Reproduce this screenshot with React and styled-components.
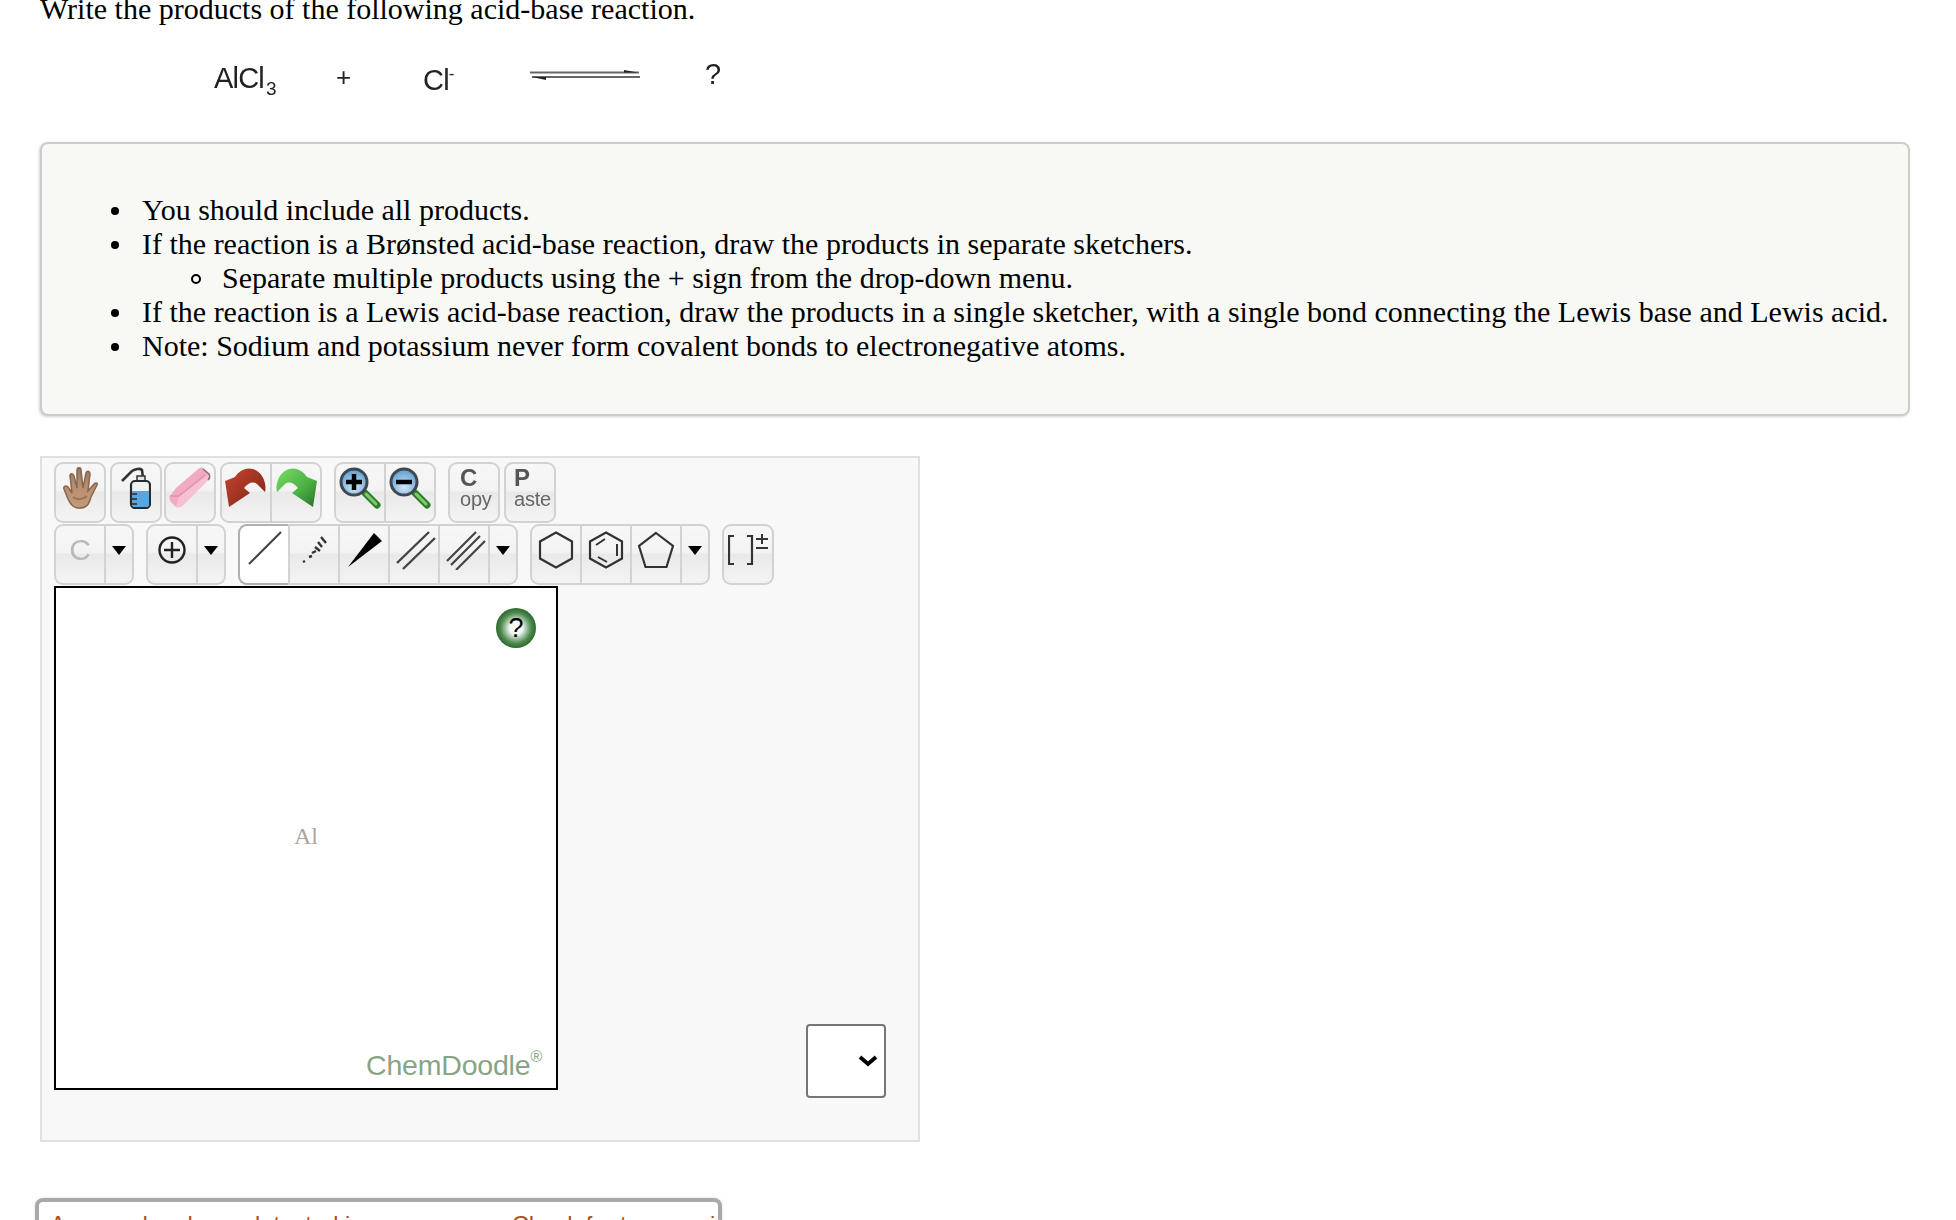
import React from 'react';
import styled, { createGlobalStyle } from 'styled-components';

const Global = createGlobalStyle`
  html, body { margin: 0; padding: 0; background: #fff; }
  body { width: 1956px; height: 1220px; overflow: hidden; font-family: "Liberation Serif", "Times New Roman", serif; color: #000; }
`;
const Page = styled.div`
  width: 1956px; height: 1220px; overflow: hidden; padding-left: 40px; box-sizing: border-box;
`;
const Title = styled.p`
  margin: -8px 0 0; font-size: 30px; line-height: 34px; height: 34px; white-space: nowrap;
`;
const Equation = styled.div`
  display: flex; align-items: flex-start; height: 116px; box-sizing: border-box; padding-top: 32px;
  font-family: "Liberation Sans", Arial, sans-serif; font-size: 29px; color: #222; filter: blur(0.5px);
`;
const Chem = styled.span`
  margin-left: ${p => p.$ml}px; width: ${p => p.$w}px; letter-spacing: ${p => p.$ls || 0}px; line-height: 32px; white-space: nowrap;
  padding-top: ${p => p.$pt || 0}px; font-size: ${p => p.$fs || 29}px;
  sub { font-size: 19px; line-height: 0; letter-spacing: 0; margin-left: 2px; } sup { font-size: 17px; line-height: 0; }
`;
const Arrow = styled.svg`
  margin-top: 9px; flex: none;
`;
const Note = styled.div`
  width: 1870px; height: 274px; box-sizing: border-box; background: #f8f9f4; border: 2px solid #ccc; border-radius: 8px;
  box-shadow: -1px 1px 3px rgba(0,0,0,.18); font-size: 30px; line-height: 34px; padding-top: 49px; white-space: nowrap;
`;
const List = styled.ul`
  margin: 0; padding-left: 100px; list-style: none;
  ul { padding-left: 80px; list-style: none; }
`;
const Item = styled.li`
  position: relative;
  &::before {
    content: ""; position: absolute; left: -31px; top: 14px; width: 8px; height: 8px; border-radius: 50%; box-sizing: border-box;
    background: #000;
  }
`;
const SubItem = styled.li`
  position: relative;
  &::before {
    content: ""; position: absolute; left: -31px; top: 13px; width: 10px; height: 10px; border-radius: 50%; box-sizing: border-box;
    border: 2px solid #000;
  }
`;
const Sketcher = styled.div`
  margin-top: 40px; width: 880px; height: 686px; box-sizing: border-box; background: #f8f8f8; border: 2px solid #e0e0e0;
  padding: 4px 0 0 12px;
`;
const Row = styled.div`
  display: flex; height: 61px; margin-bottom: 1px;
`;
const Group = styled.div`
  display: flex; margin-left: ${p => p.$ml || 0}px; border: 2px solid #d2d2d2; border-radius: 9px; box-sizing: border-box; height: 100%;
  background: linear-gradient(#f7f7f7 0%, #f3f3f3 46%, #e9e9e9 50%, #f4f4f4 100%);
`;
const Cell = styled.div`
  width: ${p => p.$w || 48}px; flex: none; height: 100%; display: flex; align-items: center; justify-content: center;
  box-sizing: border-box; padding-bottom: 9px;
  &:not(:first-child) { border-left: 2px solid #d2d2d2; width: ${p => (p.$w || 48) + 2}px; }
  svg { filter: blur(0.5px); }
`;
const ActiveCell = styled.div`
  width: 50px; flex: none; height: calc(100% + 4px); margin: -2px 0 -2px -2px; background: #fff; box-sizing: border-box;
  display: flex; align-items: center; justify-content: center;
  border: 2px solid #b0b0b0; border-right: 0; border-radius: 9px 0 0 9px; padding-bottom: 13px; padding-left: 2px;
  svg { filter: blur(0.5px); }
`;
const Tri = styled.span`
  width: 0; height: 0; border-left: 7.5px solid transparent; border-right: 7.5px solid transparent; border-top: 9px solid #000; margin-right: 1px;
`;
const Letter = styled.div`
  font-family: "Liberation Sans", Arial, sans-serif; color: #666; width: 100%; padding-left: ${p => p.$pl || 10}px; box-sizing: border-box; filter: blur(0.5px); white-space: nowrap;
  b { display: block; font-size: 24px; font-weight: 700; line-height: 22px; color: #555; }
  span { display: block; font-size: 20px; line-height: 20px; letter-spacing: -0.2px; }
`;
const CarbonLabel = styled.span`
  font-family: "Liberation Sans", Arial, sans-serif; font-size: 30px; color: #b8b8b8; filter: blur(0.5px);
`;
const Lower = styled.div`
  display: flex; align-items: flex-start;
`;
const Canvas = styled.div`
  width: 504px; height: 504px; box-sizing: border-box; background: #fff; border: 2px solid #000; position: relative; flex: none;
`;
const Help = styled.div`
  position: absolute; left: 440px; top: 20px; width: 40px; height: 40px; border-radius: 50%;
  background: radial-gradient(circle closest-side, #fff 0%, #f2f7f2 32%, #4f8a50 76%, #2a6a2d 100%);
  display: flex; align-items: center; justify-content: center;
  font-family: "Liberation Sans", Arial, sans-serif; font-size: 27px; line-height: 1; color: #000;
`;
const Atom = styled.span`
  position: absolute; left: 238px; top: 234px; font-size: 24px; line-height: 28px; color: #b0a2a0;
`;
const Brand = styled.span`
  position: absolute; right: 14px; bottom: 6px; font-family: "Liberation Sans", Arial, sans-serif; font-size: 28.5px; line-height: 34px; color: #88a484; letter-spacing: -0.2px;
  sup { font-size: 16px; position: relative; top: -3px; line-height: 0; vertical-align: super; }
`;
const SelectBox = styled.div`
  margin-left: 248px; margin-top: 438px; width: 80px; height: 74px; box-sizing: border-box; background: #fff; border: 2px solid #767676; border-radius: 4px;
  display: flex; align-items: center; justify-content: flex-end; padding-right: 6px;
`;
const Bottom = styled.div`
  margin: 56px 0 0 -5px; width: 687px; height: 60px; box-sizing: border-box; border: 4px solid #a9a9ad; border-radius: 8px; padding: 8px 11px;
  font-family: "Liberation Sans", Arial, sans-serif; font-size: 23.8px; line-height: 30px; color: #a5521f; white-space: nowrap; overflow: hidden;
  box-shadow: 0 0 3px rgba(0,0,0,.15);
`;

const Hand = () => <svg width="42" height="42" viewBox="-4 0 42 42"><defs><linearGradient id="hg" x1="0" y1="0" x2="0" y2="1"><stop offset="0" stopColor="#8f7a68"/><stop offset=".45" stopColor="#b98f70"/><stop offset="1" stopColor="#c39a7a"/></linearGradient></defs><path d="M14 41c-5-1-7-5-9-9L1 22c-1-3 2-4 4-2l4 6L7 9c0-3 3-3 4 0l3 12 0-18c0-3 4-3 4 0l2 18 3-15c1-3 4-2 4 1l-2 17 6-7c2-2 4-1 3 1l-6 12c-2 7-4 12-14 11z" fill="url(#hg)" stroke="#86684f" strokeWidth="1.5"/><path d="M10 30c4 3 10 3 14-1" stroke="#9a7558" strokeWidth="2" fill="none"/></svg>;
const Wash = () => <svg width="30" height="42" viewBox="0 0 30 42"><path d="M1 14L11 4c3-2 8-3 10-1l1 8" fill="none" stroke="#333" strokeWidth="2.6"/><rect x="16" y="9" width="8" height="6" fill="#dfe5e8" stroke="#333" strokeWidth="1.5"/><rect x="10" y="14" width="19" height="27" rx="4" fill="#eef2f3" stroke="#2a2a2a" strokeWidth="2.2"/><path d="M11 24h17v13a3 3 0 0 1-3 3H14a3 3 0 0 1-3-3z" fill="#58a6dd"/><path d="M11 27h5M11 32h5M11 37h5" stroke="#2a2a2a" strokeWidth="1.5"/></svg>;
const Eraser = () => <svg width="42" height="42" viewBox="0 0 42 42"><path d="M1 29l6-8L28 3c2-2 4-3 6-2l6 6c1 2 1 4-1 6L14 38c-2 2-5 3-7 2l-5-5c-1-2-2-4-1-6z" fill="#f2aac3"/><path d="M40 7c1 2 1 4-1 6L14 38c-2 2-5 3-7 2l3-11z" fill="#f7c0d3"/><path d="M1 29l9 0L36 8" fill="none" stroke="#dd93ae" strokeWidth="1.5"/><path d="M34 2l6 5c1 2 1 4-1 6" fill="none" stroke="#84707a" strokeWidth="1.6"/></svg>;
const Undo = () => <svg width="42" height="40" viewBox="0 0 42 40"><defs><linearGradient id="ug" x1="0" y1="0" x2="1" y2="1"><stop offset="0" stopColor="#c5442c"/><stop offset="1" stopColor="#7d2417"/></linearGradient></defs><path d="M0 13L4 39 25 25 19 20C23 15 28 13 32 16L40 24C42 16 38 4 28 1 20-1 14 3 10 9z" fill="url(#ug)"/></svg>;
const Redo = () => <svg width="42" height="40" viewBox="0 0 42 40"><defs><linearGradient id="rg" x1="0" y1="0" x2="1" y2="1"><stop offset="0" stopColor="#78dc68"/><stop offset=".6" stopColor="#4aae42"/><stop offset="1" stopColor="#2b6e28"/></linearGradient></defs><path d="M42 13L38 39 17 25 23 20C19 15 14 13 10 16L2 24C0 16 4 4 14 1 22-1 28 3 32 9z" fill="url(#rg)"/></svg>;
const Zoom = ({ plus, id }) => <svg width="42" height="42" viewBox="0 0 42 42"><defs><radialGradient id={id} cx=".5" cy=".7" r=".7"><stop offset="0" stopColor="#cfe6f7"/><stop offset="1" stopColor="#5b9bd0"/></radialGradient></defs><path d="M26 26l12 12" stroke="#2f7d2b" strokeWidth="7" strokeLinecap="round"/><path d="M27 27l10 10" stroke="#7ccc68" strokeWidth="3" strokeLinecap="round"/><circle cx="15" cy="15" r="13" fill={`url(#${id})`} stroke="#3f4750" strokeWidth="3"/><path d="M7 15h16" stroke="#000" strokeWidth="4.5"/>{plus && <path d="M15 7v16" stroke="#000" strokeWidth="4.5"/>}</svg>;
const PlusCircle = () => <svg width="30" height="30" viewBox="0 0 30 30"><circle cx="15" cy="15" r="12.5" fill="none" stroke="#222" strokeWidth="2.4"/><path d="M15 7v16M7 15h16" stroke="#222" strokeWidth="2.4"/></svg>;
const Single = () => <svg width="36" height="36" viewBox="0 0 36 36"><path d="M2 34L34 2" stroke="#444" strokeWidth="2.2"/></svg>;
const Dashed = () => <svg width="32" height="32" viewBox="-4 2 32 32"><path d="M1 30l2-1M7 25l3-1M10 21l4-2M13 15l5 4M16 10l4 5M19 5l5 6" stroke="#333" strokeWidth="2.4"/></svg>;
const Wedge = () => <svg width="38" height="36" viewBox="-2 0 38 36"><path d="M1 35L27 1l8 8z" fill="#000"/></svg>;
const Double = () => <svg width="44" height="40" viewBox="-4 0 44 40"><path d="M1 33L33 2M7 39L39 8" stroke="#444" strokeWidth="2.4"/></svg>;
const Triple = () => <svg width="44" height="40" viewBox="-4 0 44 40"><path d="M1 31L30 2M5 35L34 6M10 40L39 11" stroke="#444" strokeWidth="2.2"/></svg>;
const Hexagon = () => <svg width="36" height="38" viewBox="0 0 36 38"><path d="M18 1.500l16 9v17l-16 9-16-9v-17z" fill="none" stroke="#333" strokeWidth="2.2"/></svg>;
const Benzene = () => <svg width="36" height="38" viewBox="0 0 36 38"><path d="M18 1.500l16 9v17l-16 9-16-9v-17z" fill="none" stroke="#333" strokeWidth="2.2"/><path d="M8 14l9-6M29 13v12M10 26l9 5" stroke="#333" strokeWidth="2"/></svg>;
const Pentagon = () => <svg width="40" height="38" viewBox="0 0 40 38"><path d="M20 2l17 13-6.500 21h-21L3 15z" fill="none" stroke="#333" strokeWidth="2.2"/></svg>;
const Bracket = () => <svg width="40" height="32" viewBox="0 0 40 32"><path d="M6 2H1v28h5M19 2h5v28h-5" fill="none" stroke="#333" strokeWidth="2.2"/><path d="M28 5h12M34 0v10M28 14h12" stroke="#333" strokeWidth="2"/></svg>;
const Chevron = () => <svg width="20" height="14" viewBox="0 0 20 14"><path d="M2 3l8 7 8-7" fill="none" stroke="#000" strokeWidth="3.8"/></svg>;

export default function App() {
  return (
    <Page>
      <Global />
      <Title>Write the products of the following acid-base reaction.</Title>
      <Equation>
        <Chem $ml={174} $w={122} $ls={-0.8} $pt={4}>AlCl<sub>3</sub></Chem>
        <Chem $ml={0} $w={87} $pt={3} $fs={26}>+</Chem>
        <Chem $ml={0} $w={107} $ls={-0.8} $pt={6}>Cl<sup>-</sup></Chem>
        <Arrow width="110" height="16" viewBox="0 0 110 16"><path d="M0 5.500h109M2 10h108" stroke="#666" strokeWidth="2" /><path d="M94 3l14 2.500H94zM16 13L2 10h14z" fill="#222" /></Arrow>
        <Chem $ml={65} $w={20} $pt={-9}>?</Chem>
      </Equation>
      <Note>
        <List>
          <Item>You should include all products.</Item>
          <Item>If the reaction is a Brønsted acid-base reaction, draw the products in separate sketchers.
            <ul><SubItem>Separate multiple products using the + sign from the drop-down menu.</SubItem></ul>
          </Item>
          <Item>If the reaction is a Lewis acid-base reaction, draw the products in a single sketcher, with a single bond connecting the Lewis base and Lewis acid.</Item>
          <Item>Note: Sodium and potassium never form covalent bonds to electronegative atoms.</Item>
        </List>
      </Note>
      <Sketcher>
        <Row>
          <Group><Cell><Hand /></Cell></Group>
          <Group $ml={4}><Cell><Wash /></Cell></Group>
          <Group $ml={2}><Cell><Eraser /></Cell></Group>
          <Group $ml={4}><Cell><Undo /></Cell><Cell><Redo /></Cell></Group>
          <Group $ml={12}><Cell><Zoom plus id="z1" /></Cell><Cell><Zoom id="z2" /></Cell></Group>
          <Group $ml={12}><Cell><Letter><b>C</b><span>opy</span></Letter></Cell></Group>
          <Group $ml={4}><Cell><Letter $pl={8}><b>P</b><span>aste</span></Letter></Cell></Group>
        </Row>
        <Row>
          <Group><Cell><CarbonLabel>C</CarbonLabel></Cell><Cell $w={26}><Tri /></Cell></Group>
          <Group $ml={12}><Cell><PlusCircle /></Cell><Cell $w={26}><Tri /></Cell></Group>
          <Group $ml={12}><ActiveCell><Single /></ActiveCell><Cell><Dashed /></Cell><Cell><Wedge /></Cell><Cell><Double /></Cell><Cell><Triple /></Cell><Cell $w={26}><Tri /></Cell></Group>
          <Group $ml={12}><Cell><Hexagon /></Cell><Cell><Benzene /></Cell><Cell><Pentagon /></Cell><Cell $w={26}><Tri /></Cell></Group>
          <Group $ml={12}><Cell><Bracket /></Cell></Group>
        </Row>
        <Lower>
          <Canvas>
            <Help>?</Help>
            <Atom>Al</Atom>
            <Brand>ChemDoodle<sup>®</sup></Brand>
          </Canvas>
          <SelectBox><Chevron /></SelectBox>
        </Lower>
      </Sketcher>
      <Bottom>An error has been detected in your answer. Check for typos, miscalculations etc. before submitting your answer.</Bottom>
    </Page>
  );
}
